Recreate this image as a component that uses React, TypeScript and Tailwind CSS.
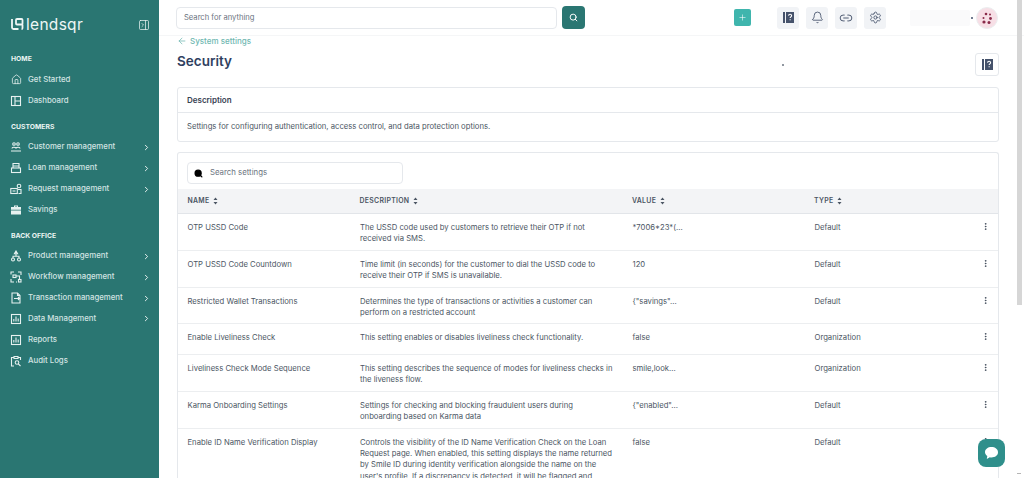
import React from "react";
import { ArrowLeft, Bell, ChevronRight, EllipsisVertical, House, Link2, PanelRightClose, Plus, Search, Settings } from "lucide-react";

const font = "font-['Inter',sans-serif]";

const BookIcon = () => (
  <svg width="13" height="13" viewBox="0 0 13 13">
    <path d="M1 1h2v11H1z" fill="#45526b" />
    <path d="M4 1h8v11H4z" fill="#45526b" />
    <path d="M6.6 4.7c0-2 3-2 3 0 0 1.100-1.500 1.200-1.500 2.400" fill="none" stroke="#fff" strokeWidth="1.100" />
    <path d="M7.600 8.200h1.100v1.100H7.600z" fill="#fff" />
  </svg>
);

const Glyph = ({ children }: { children: React.ReactNode }) => (
  <svg width="12" height="12" viewBox="0 0 12 12" fill="none" stroke="currentColor" strokeWidth="1.100" className="text-[#e6f1f0]">
    {children}
  </svg>
);

const HomeIcon = () => <House size={11} strokeWidth={1.7} className="text-[#e6f1f0]" />;

const DashboardIcon = () => (
  <Glyph>
    <rect x="1.500" y="1.500" width="9" height="9" />
    <path d="M5 1.500v9M5 6h5.500" />
  </Glyph>
);

const CustomerIcon = () => (
  <Glyph>
    <circle cx="4" cy="3" r="1.300" />
    <circle cx="8" cy="3" r="1.300" />
    <path d="M2 7.500c0-1.500 3-1.500 4-.5 1-1 4-1 4 .5M1 10h10" />
  </Glyph>
);

const LoanIcon = () => (
  <Glyph>
    <path d="M3 6V1.500h6V6M3 4h6" />
    <rect x="1.500" y="6" width="9" height="4.500" />
  </Glyph>
);

const RequestIcon = () => (
  <Glyph>
    <rect x="0.800" y="5.500" width="6.500" height="5" />
    <path d="M2.500 8h3" />
    <circle cx="9" cy="3" r="1.800" />
    <path d="M8 6.500h3v4H8.500" />
  </Glyph>
);

const SavingsIcon = () => (
  <svg width="12" height="12" viewBox="0 0 12 12" fill="currentColor" className="text-[#e6f1f0]">
    <path d="M4 3V1.500h4V3h3v2.800H1V3zM5 3h2v-.6H5zM1 6.600h10V10.500H1z" />
  </svg>
);

const ProductIcon = () => (
  <Glyph>
    <path d="M6 1l1.600 2.800H4.400z" />
    <path d="M6 4v2M3 8V6.200h6V8" />
    <circle cx="3" cy="9.500" r="1.500" />
    <circle cx="9" cy="9.500" r="1.500" />
  </Glyph>
);

const WorkflowIcon = () => (
  <Glyph>
    <path d="M1 3.500V1h3M8 1h3v3M1 8v3h3M6 11h1" />
    <rect x="3" y="4" width="3" height="2.500" />
    <path d="M6 5h3.500v3" />
    <rect x="8.500" y="8.500" width="2.500" height="2.500" />
  </Glyph>
);

const TransactionIcon = () => (
  <Glyph>
    <path d="M7.500 1H2v10h8V3.500z" />
    <path d="M7.500 1v2.500H10M4 6.500h5.500M8 5l1.500 1.500L8 8" />
  </Glyph>
);

const ChartBoxIcon = () => (
  <Glyph>
    <rect x="1.500" y="1.500" width="9" height="9" />
    <path d="M3.800 8.500V6M6 8.500V3.500M8.200 8.500V5.500" />
  </Glyph>
);

const AuditIcon = () => (
  <Glyph>
    <path d="M4 2.500H1.500V11H4M8 2.500h2.500V5" />
    <path d="M4 1.500h4v2H4z" />
    <circle cx="7" cy="7.500" r="1.800" />
    <path d="M8.300 8.800L10.500 11" />
  </Glyph>
);

const NavSection = ({ children }: { children: React.ReactNode }) => (
  <div className="flex h-[20px] items-center pl-[11px] text-[6.8px] font-bold text-[#eaf4f3]">{children}</div>
);

const NavItem = ({ icon, label, arrow = false }: { icon: React.ReactNode; label: string; arrow?: boolean }) => (
  <div className="flex h-[20.900px] items-center pl-[10px] pr-[8px] text-[7.8px] font-medium text-[#d3e4e3]">
    <span className="flex w-[12px] justify-center">{icon}</span>
    <span className="ml-[6px] flex-1">{label}</span>
    {arrow && <ChevronRight size={9} strokeWidth={2.6} className="text-[#e6f1f0]" />}
  </div>
);

const Sidebar = () => (
  <aside className="flex w-[159px] shrink-0 flex-col bg-[#2a7672]">
    <div className="flex h-[49.500px] shrink-0 items-center pl-[11px] pr-[9px]">
      <svg width="13" height="13" viewBox="0 0 13 13" fill="none" stroke="#eef6f5" strokeWidth="1.800">
        <path d="M1 1v8.500q0 1.500 1.500 1.500h5" />
        <rect x="5" y="1" width="6.500" height="5.500" rx="1" />
        <path d="M11.500 6.500V10q0 1-1 1" />
      </svg>
      <span className="ml-[2px] flex-1 text-[15.5px] font-normal leading-none tracking-[0.3px] text-[#eef6f5]">lendsqr</span>
      <PanelRightClose size={12} strokeWidth={1.500} className="text-[#e6f1f0]" />
    </div>
    <NavSection>HOME</NavSection>
    <NavItem icon={<HomeIcon />} label="Get Started" />
    <NavItem icon={<DashboardIcon />} label="Dashboard" />
    <div className="h-[5.500px]" />
    <NavSection>CUSTOMERS</NavSection>
    <NavItem icon={<CustomerIcon />} label="Customer management" arrow />
    <NavItem icon={<LoanIcon />} label="Loan management" arrow />
    <NavItem icon={<RequestIcon />} label="Request management" arrow />
    <NavItem icon={<SavingsIcon />} label="Savings" />
    <div className="h-[5.500px]" />
    <NavSection>BACK OFFICE</NavSection>
    <NavItem icon={<ProductIcon />} label="Product management" arrow />
    <NavItem icon={<WorkflowIcon />} label="Workflow management" arrow />
    <NavItem icon={<TransactionIcon />} label="Transaction management" arrow />
    <NavItem icon={<ChartBoxIcon />} label="Data Management" arrow />
    <NavItem icon={<ChartBoxIcon />} label="Reports" />
    <NavItem icon={<AuditIcon />} label="Audit Logs" />
  </aside>
);

const TopIcon = ({ children }: { children: React.ReactNode }) => (
  <div className="flex h-[22px] w-[22px] items-center justify-center rounded-[3px] bg-[#f1f3f6] text-[#45526b]">{children}</div>
);

const Topbar = () => (
  <header className="flex h-[36px] shrink-0 items-center border-b border-[#f5f6f7] pl-[17px] pr-[24px]">
    <div className="flex h-[22px] w-[381px] items-center rounded-[4px] border border-[#e5e8ec] pl-[7px] text-[7.6px] text-[#6b7480]">
      Search for anything
    </div>
    <div className="ml-[5px] flex h-[23px] w-[23px] items-center justify-center rounded-[4px] bg-[#2a7672]">
      <Search size={9} strokeWidth={2.6} className="text-white" />
    </div>
    <div className="ml-[149px] flex h-[17px] w-[17px] items-center justify-center rounded-[2px] bg-[#3fb5ad]">
      <Plus size={9} strokeWidth={1.500} className="text-white" />
    </div>
    <div className="ml-[26px] flex gap-[7px]">
      <TopIcon>
        <BookIcon />
      </TopIcon>
      <TopIcon>
        <Bell size={13} strokeWidth={1.600} />
      </TopIcon>
      <TopIcon>
        <Link2 size={14} strokeWidth={1.600} />
      </TopIcon>
      <TopIcon>
        <Settings size={13} strokeWidth={1.600} />
      </TopIcon>
    </div>
    <div className="ml-[24px] h-[16px] w-[60px] rounded-[2px] bg-[#fafafb]" />
    <div className="ml-[1px] h-[2px] w-[2px] rounded-full bg-[#45526b]" />
    <div className="ml-[3px] flex h-[22px] w-[22px] items-center justify-center rounded-full border border-[#eceef0] bg-[#f7dfe6]">
      <svg width="14" height="14" viewBox="0 0 14 14" fill="#8a2b4a">
        <circle cx="6" cy="3" r="1.300" />
        <circle cx="10" cy="3.500" r="1" />
        <circle cx="3.500" cy="7" r="1" />
        <circle cx="10.500" cy="7.500" r="1.400" />
        <circle cx="4" cy="11" r="1.600" />
        <circle cx="9" cy="11.500" r="1.500" />
      </svg>
    </div>
  </header>
);

const rows = [
  {
    name: "OTP USSD Code",
    description: "The USSD code used by customers to retrieve their OTP if not received via SMS.",
    value: "*7006*23*(...",
    type: "Default",
    height: "h-[37px]",
  },
  {
    name: "OTP USSD Code Countdown",
    description: "Time limit (in seconds) for the customer to dial the USSD code to receive their OTP if SMS is unavailable.",
    value: "120",
    type: "Default",
    height: "h-[37px]",
  },
  {
    name: "Restricted Wallet Transactions",
    description: "Determines the type of transactions or activities a customer can perform on a restricted account",
    value: '{"savings"...',
    type: "Default",
    height: "h-[36px]",
  },
  {
    name: "Enable Liveliness Check",
    description: "This setting enables or disables liveliness check functionality.",
    value: "false",
    type: "Organization",
    height: "h-[31px]",
  },
  {
    name: "Liveliness Check Mode Sequence",
    description: "This setting describes the sequence of modes for liveliness checks in the liveness flow.",
    value: "smile,look...",
    type: "Organization",
    height: "h-[37px]",
  },
  {
    name: "Karma Onboarding Settings",
    description: "Settings for checking and blocking fraudulent users during onboarding based on Karma data",
    value: '{"enabled"...',
    type: "Default",
    height: "h-[37px]",
  },
  {
    name: "Enable ID Name Verification Display",
    description:
      "Controls the visibility of the ID Name Verification Check on the Loan Request page. When enabled, this setting displays the name returned by Smile ID during identity verification alongside the name on the user's profile. If a discrepancy is detected, it will be flagged and",
    value: "false",
    type: "Default",
    height: "h-[56px]",
  },
];

const columns = "grid grid-cols-[172px_272.500px_182px_1fr_20px]";

const SortIcon = () => (
  <svg width="5" height="8" viewBox="0 0 5 8" fill="currentColor">
    <path d="M2.500 0.500L4.500 3H0.500zM2.500 7.500L0.500 5H4.500z" />
  </svg>
);

const HeaderCell = ({ label }: { label: string }) => (
  <div className="flex items-center gap-[4px] pl-[9.500px] text-[6.9px] font-semibold tracking-[0.3px] text-[#4b5563]">
    {label}
    <SortIcon />
  </div>
);

const SettingsTable = () => (
  <div className="mt-[10px] rounded-t-[3px] border border-b-0 border-[#e5e8ec]">
    <div className="flex h-[36px] items-start pl-[9px] pt-[9px]">
      <div className="flex h-[22px] w-[216px] items-center rounded-[4px] border border-[#e5e8ec] pl-[6px] text-[7.8px] text-[#6b7480]">
        <Search size={9} strokeWidth={3.500} fill="#000" className="text-black" />
        <span className="ml-[7px]">Search settings</span>
      </div>
    </div>
    <div className={`${columns} h-[25px] border-b border-[#e2e5e9] bg-[#f3f4f6]`}>
      <HeaderCell label="NAME" />
      <HeaderCell label="DESCRIPTION" />
      <HeaderCell label="VALUE" />
      <HeaderCell label="TYPE" />
      <div />
    </div>
    {rows.map((row) => (
      <div
        key={row.name}
        className={`${columns} ${row.height} border-b border-[#eceef0] text-[7.7px] leading-[11.4px] text-[#4b5563]`}
      >
        <div className="pl-[9.500px] pt-[7.500px]">{row.name}</div>
        <div className="pl-[10px] pr-[9px] pt-[7.500px]">{row.description}</div>
        <div className="pl-[10px] pt-[7.500px]">{row.value}</div>
        <div className="pl-[10px] pt-[7.500px]">{row.type}</div>
        <div className="pl-[3px] pt-[8px]">
          <EllipsisVertical size={9} strokeWidth={2.200} className="text-[#374151]" />
        </div>
      </div>
    ))}
  </div>
);

export default function App() {
  return (
    <div className={`${font} relative flex h-[478px] w-[1024px] overflow-hidden bg-white`}>
      <Sidebar />
      <div className="flex min-w-0 flex-1 flex-col">
        <Topbar />
        <main className="min-h-0 flex-1 overflow-hidden pl-[18px] pr-[25px]">
          <div className="flex h-[10px] items-center gap-[3px] text-[8px] font-medium text-[#6fb7b1]">
            <ArrowLeft size={10} strokeWidth={1.800} />
            <span>System settings</span>
          </div>
          <div className="flex h-[41px] items-start justify-between pt-[7px]">
            <h1 className="text-[13.5px] font-semibold leading-[17px] text-[#2f3f5f]">Security</h1>
            <div className="flex h-[23px] w-[24px] items-center justify-center rounded-[3px] border border-[#e5e8ec]">
              <BookIcon />
            </div>
          </div>
          <section className="rounded-[3px] border border-[#e5e8ec]">
            <div className="flex h-[25px] items-center border-b border-[#e5e8ec] pl-[9px] text-[8px] font-semibold text-[#374151]">
              Description
            </div>
            <div className="flex h-[28px] items-center pl-[9px] text-[7.7px] text-[#4b5563]">
              Settings for configuring authentication, access control, and data protection options.
            </div>
          </section>
          <SettingsTable />
        </main>
      </div>
      <div className="absolute left-[782px] top-[64px] h-[2px] w-[2px] rounded-full bg-[#6b7480]" />
      <div className="absolute bottom-[11px] left-[978px] flex h-[28px] w-[27px] items-center justify-center rounded-[8px] bg-[#2f8f8b]">
        <svg width="15" height="14" viewBox="0 0 15 14" fill="#fff">
          <path d="M7.500 1C11 1 14 3 14 6.200S11 11.400 7.500 11.400c-.6 0-1.200-.1-1.700-.2L2.800 13l.5-3C1.900 9 1 7.700 1 6.200 1 3 4 1 7.500 1z" />
        </svg>
      </div>
      <div className="absolute right-[2px] top-0 h-[305px] w-[5px] bg-[#d6d6d6]" />
      <div className="absolute bottom-[4px] right-[3px] h-[1px] w-[4px] bg-[#b5b5b5]" />
    </div>
  );
}
